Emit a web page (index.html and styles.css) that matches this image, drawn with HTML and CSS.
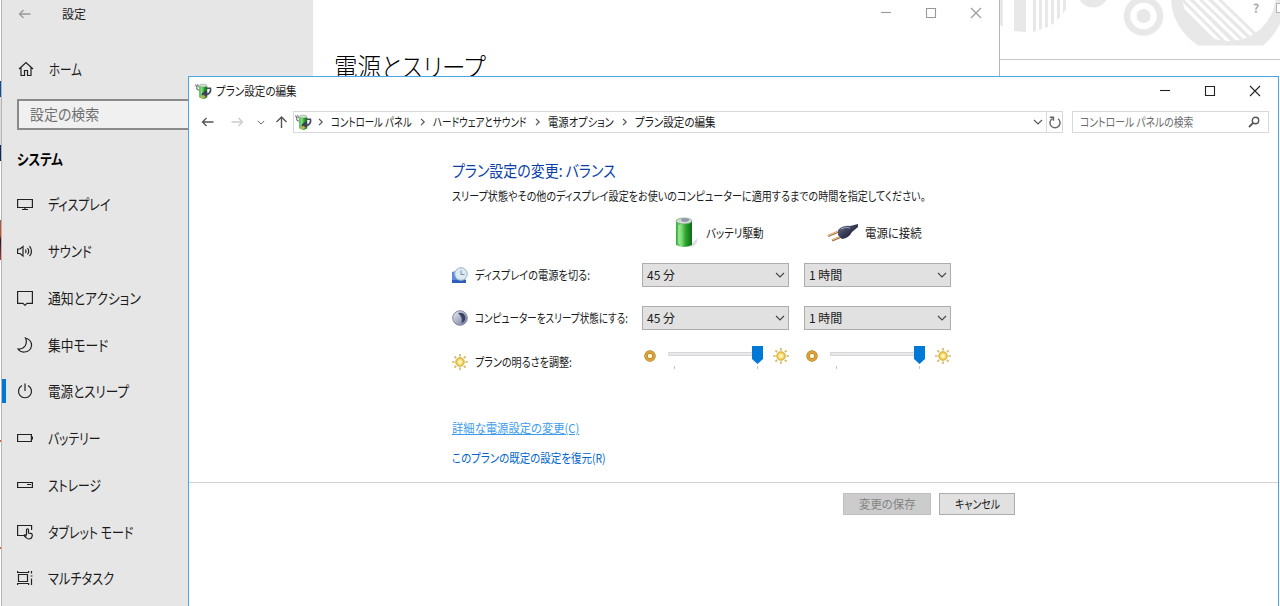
FILE: index.html
```html
<!DOCTYPE html>
<html lang="ja">
<head>
    <meta charset="UTF-8">
    <meta name="viewport" content="width=device-width, initial-scale=1.0">
    <title>プラン設定の編集</title>
    <link rel="stylesheet" href="styles.css">
</head>
<body>
    <!-- shared icons -->
    <svg width="0" height="0" class="defs">
        <defs>
            <clipPath id="ring"><circle cx="1229" cy="-6" r="47"/></clipPath>
            <linearGradient id="green" x1="0" x2="1" y1="0" y2="0">
                <stop offset="0" stop-color="#2fae35"/><stop offset=".3" stop-color="#8be383"/><stop offset=".6" stop-color="#2fa52f"/><stop offset="1" stop-color="#0c6b17"/>
            </linearGradient>
            <radialGradient id="gold">
                <stop offset="0" stop-color="#fffce0"/><stop offset=".5" stop-color="#fae684"/><stop offset="1" stop-color="#d9a91f"/>
            </radialGradient>
            <linearGradient id="moon" x1="0" x2="1" y1="0" y2="1">
                <stop offset="0" stop-color="#eef0f8"/><stop offset="1" stop-color="#6b7594"/>
            </linearGradient>
            <linearGradient id="plug" x1="0" x2="1" y1="0" y2="1">
                <stop offset="0" stop-color="#707894"/><stop offset=".5" stop-color="#353a55"/><stop offset="1" stop-color="#14172b"/>
            </linearGradient>
            <symbol id="power-app" viewBox="0 0 16 16">
                <path d="M4 3v10.500q3.500 3 7.500 0V3z" fill="url(#green)"/>
                <path d="M4 3q0-2 3.700-2t3.800 2q-3.700 1.500-7.500 0z" fill="#d2e3d0" stroke="#869b86" stroke-width=".5"/>
                <path d="M.5 1.500l1.500 3M2.500 1l.7 3M1.500 4.500q.5 2.500 2.500 2" fill="none" stroke="#59616b"/>
                <path d="M11 5h3.500q1 4-3 6" fill="none" stroke="#454c60" stroke-width="1.500"/>
                <path d="M6 11q1-3 5-4.500l1 4.500-4 2z" fill="#3e4357"/>
                <path d="M5 13l3-2 2 2-3 1.500z" fill="#d0a65a"/>
            </symbol>
            <symbol id="sun" viewBox="0 0 16 16">
                <path d="M8 0v16M0 8h16M2.400 2.400l11.200 11.200M13.600 2.400L2.400 13.600" stroke="#d9b962" stroke-width="1.700"/>
                <circle cx="8" cy="8" r="5.500" fill="#fff"/>
                <circle cx="8" cy="8" r="4.400" fill="url(#gold)" stroke="#d8b95a" stroke-width=".8"/>
            </symbol>
            <symbol id="dim" viewBox="0 0 12 12">
                <circle cx="6" cy="6" r="4" fill="#fff6dc" stroke="#a87522" stroke-width="3.400"/>
                <circle cx="6" cy="6" r="4" fill="none" stroke="#dca438" stroke-width="2.400"/>
            </symbol>
            <symbol id="chev" viewBox="0 0 10 6">
                <path d="M1 1l4 4 4-4" fill="none" stroke="currentColor" stroke-width="1.100"/>
            </symbol>
            <symbol id="next" viewBox="0 0 6 8">
                <path d="M1 .8l3.200 3.200L1 7.200" fill="none" stroke="currentColor" stroke-width="1.200"/>
            </symbol>
            <symbol id="arrow" viewBox="0 0 12 10">
                <path d="M12 5H1M5 1L1 5l4 4" fill="none" stroke="currentColor" stroke-width="1.300"/>
            </symbol>
        </defs>
    </svg>

    <div class="edge"></div>

    <div class="backdrop">
        <svg width="280" height="59" viewBox="1000 0 280 59">
            <g fill="#e8e8e8">
                <path d="M1000 0h3v27l-3-2zM1014 0h12v32l-12-1zM1033 0h3v31l-3 1zM1039 0h3v29l-3 1zM1045 0h3v27l-3 1zM1051 0h3v23l-3 2zM1057 0h3v17l-3 3zM1063 0h3v9l-3 5z"/>
                <circle cx="1093" cy="-8" r="15.500"/>
                <path d="M1171 0H1286q-2 28-23 45.500h-65q-25-17-27-45.500z"/>
            </g>
            <circle cx="1143.500" cy="16" r="16.500" fill="none" stroke="#e8e8e8" stroke-width="6.500"/>
            <circle cx="1143.500" cy="16" r="7" fill="#e8e8e8"/>
            <g clip-path="url(#ring)">
                <path d="M1218-4h60v58z" fill="#fff"/>
                <path d="M1166-12l60 60M1177-10l58 58M1186-10l60 58M1196-9l58 56M1207-8l56 54" fill="none" stroke="#fff" stroke-width="3.400"/>
            </g>
            <rect x="1276.500" y="3.500" width="8" height="9" fill="#fff" stroke="#b5b5b5"/>
        </svg>
        <span class="help">?</span>
    </div>

    <div class="settings">
        <div class="sidebar">
            <div class="caption">
                <svg class="back" width="13" height="10"><use href="#arrow"/></svg>
                <span>設定</span>
            </div>
            <div class="home">
                <svg width="16" height="16" viewBox="0 0 16 16"><path d="M1 8l7-6.500L15 8M3 6.500v8h3.500v-5h3v5H13v-8"/></svg>
                <span class="fit f77">ホーム</span>
            </div>
            <div class="search"><span class="fit f93">設定の検索</span></div>
            <h3><span class="fit f83">システム</span></h3>
            <ul>
                <li>
                    <svg width="16" height="16" viewBox="0 0 16 16"><path d="M.6 3.500h14.800v8H.6zM8 11.500V14M5 13.500h6"/></svg>
                    <span class="fit f80">ディスプレイ</span>
                </li>
                <li>
                    <svg width="16" height="16" viewBox="0 0 16 16"><path d="M.6 6v4.500H3L6 13V3.500L3 6zM8.500 6.500q1 1.700 0 3.500M10.500 5q2.500 3.200 0 6.500M12.500 3.200q4 5 0 10"/></svg>
                    <span class="fit f83">サウンド</span>
                </li>
                <li>
                    <svg width="16" height="16" viewBox="0 0 16 16"><path d="M.6 1.500h14.800v11.800H10L8 15.300l-2-2H.6z"/></svg>
                    <span class="fit f86">通知とアクション</span>
                </li>
                <li>
                    <svg width="16" height="16" viewBox="0 0 16 16"><path d="M8.500 1q2 4-.5 8-2.500 3.500-7 3 2.500 3.500 6.500 3 6-.5 7-6Q15 3 8.500 1z"/></svg>
                    <span class="fit f85">集中モード</span>
                </li>
                <li class="current">
                    <svg width="16" height="16" viewBox="0 0 16 16"><path d="M8 .5V8M5 2.500a6.500 6.500 0 1 0 6 0"/></svg>
                    <span class="fit f84">電源とスリープ</span>
                </li>
                <li>
                    <svg width="16" height="16" viewBox="0 0 16 16"><path d="M.6 4.500h13.800v7H.6zM15.400 6.500v3"/></svg>
                    <span class="fit f79">バッテリー</span>
                </li>
                <li>
                    <svg width="16" height="16" viewBox="0 0 16 16"><path d="M.6 5.500h14.800v5H.6zM10 7.500h4"/></svg>
                    <span class="fit f79">ストレージ</span>
                </li>
                <li>
                    <svg width="16" height="16" viewBox="0 0 16 16"><path d="M6.500 11.500H.6v-10h14V6M9.500 11V5.500q1-1.500 2 0v3.500l3 .6q1 .5.700 2.400-.5 3-3.200 3-2 0-3-1.500L7 11.500q.7-1.500 2.500.5"/></svg>
                    <span class="fit f80">タブレット モード</span>
                </li>
                <li>
                    <svg width="16" height="16" viewBox="0 0 16 16"><path d="M1.500 4.500h9v7h-9zM.6 1v1.500h11V1M.6 15v-1.500h11V15M14.500 1v2.500M14.500 8.500V15M13.500 6h2"/></svg>
                    <span class="fit f81">マルチタスク</span>
                </li>
            </ul>
        </div>
        <div class="page">
            <div class="controls">
                <svg width="12" height="12" viewBox="0 0 12 12"><path d="M1 5.500h10"/></svg>
                <svg width="12" height="12" viewBox="0 0 12 12"><path d="M1.500 1.500h9v9h-9z"/></svg>
                <svg width="12" height="12" viewBox="0 0 12 12"><path d="M1 1l10 10M11 1L1 11"/></svg>
            </div>
            <h1><span class="fit f91">電源とスリープ</span></h1>
        </div>
    </div>

    <div class="window">
        <div class="titlebar">
            <svg width="17" height="17"><use href="#power-app"/></svg>
            <span class="title fit f88">プラン設定の編集</span>
            <div class="controls">
                <svg width="12" height="12" viewBox="0 0 12 12"><path d="M1 5.500h10"/></svg>
                <svg width="12" height="12" viewBox="0 0 12 12"><path d="M1.500 1.500h9v9h-9z"/></svg>
                <svg width="12" height="12" viewBox="0 0 12 12"><path d="M1 1l10 10M11 1L1 11"/></svg>
            </div>
        </div>

        <div class="navbar">
            <div class="nav-buttons">
                <svg width="13" height="10"><use href="#arrow"/></svg>
                <svg class="forward" width="13" height="10"><use href="#arrow"/></svg>
                <svg class="recent" width="8" height="5"><use href="#chev"/></svg>
                <svg class="up" width="13" height="12" viewBox="0 0 13 12"><path d="M6.500 12V1M1.500 6l5-5 5 5" fill="none" stroke="currentColor" stroke-width="1.400"/></svg>
            </div>
            <div class="address">
                <svg class="app" width="17" height="17"><use href="#power-app"/></svg>
                <svg class="sep" width="6" height="8"><use href="#next"/></svg>
                <span class="crumb c1"><span class="fit f79">コントロール パネル</span></span>
                <svg class="sep" width="6" height="8"><use href="#next"/></svg>
                <span class="crumb c2"><span class="fit f80">ハードウェアとサウンド</span></span>
                <svg class="sep" width="6" height="8"><use href="#next"/></svg>
                <span class="crumb c3"><span class="fit f86">電源オプション</span></span>
                <svg class="sep" width="6" height="8"><use href="#next"/></svg>
                <span class="crumb"><span class="fit f88">プラン設定の編集</span></span>
                <svg class="drop" width="10" height="6"><use href="#chev"/></svg>
                <div class="refresh">
                    <svg width="12" height="13" viewBox="0 0 12 13"><path d="M3.500 2.500A5 5 0 1 0 9 2.800M.8 1.200h3.700v3.600" fill="none" stroke="#666" stroke-width="1.400"/></svg>
                </div>
            </div>
            <div class="find">
                <span class="fit f82">コントロール パネルの検索</span>
                <svg width="12" height="12" viewBox="0 0 12 12"><circle cx="7.500" cy="4.500" r="3.200" fill="none" stroke="#555" stroke-width="1.400"/><path d="M5.200 6.800L1 11" stroke="#555" stroke-width="1.800"/></svg>
            </div>
        </div>

        <div class="content">
            <h2><span class="fit f87">プラン設定の変更: バランス</span></h2>
            <p class="lead"><span class="fit">スリープ状態やその他のディスプレイ設定をお使いのコンピューターに適用するまでの時間を指定してください。</span></p>

            <div class="plan">
                <div></div>
                <div class="source battery">
                    <svg width="24" height="32" viewBox="0 0 24 32">
                        <path d="M15 30l8-9v4q-2 5-8 5z" fill="#c9c9c9" opacity=".6"/>
                        <path d="M2 4v24q8 4 16 0V4z" fill="url(#green)"/>
                        <ellipse cx="10" cy="4" rx="8" ry="3" fill="#cfdcd0" stroke="#6f9d72" stroke-width=".7"/>
                        <ellipse cx="11" cy="3" rx="4" ry="1.800" fill="#9293ad"/>
                        <path d="M5 8v19" stroke="#b8f0ae" stroke-width="1.500" opacity=".7"/>
                    </svg>
                    <span class="fit f88">バッテリ駆動</span>
                </div>
                <div class="source plugged">
                    <svg width="32" height="18" viewBox="0 0 32 18">
                        <path d="M1 12l12-5M5 16.500l12-5" stroke="#a56c3c" stroke-width="2.200"/>
                        <path d="M1 11.600l12-5M5 16l12-5" stroke="#f1cc9b"/>
                        <path d="M11 6q5-5 12-4l8-2v3l-6 5q-3 6-10 7l-4-4z" fill="url(#plug)"/>
                        <path d="M14 5q5-3 9-1" fill="none" stroke="#a5abc0"/>
                    </svg>
                    <span class="fit f95">電源に接続</span>
                </div>

                <div class="label">
                    <svg width="16" height="16" viewBox="0 0 16 16">
                        <path d="M0 5l11-3 3 13H0z" fill="#5c8ae0"/>
                        <path d="M0 13h14v3H0z" fill="#2f5cc0"/>
                        <circle cx="9" cy="7" r="6.300" fill="#dbe9f3" stroke="#9fb0c3"/>
                        <path d="M9 3.500v4h3.500" fill="none" stroke="#7d90a3"/>
                    </svg>
                    <span class="fit f85">ディスプレイの電源を切る:</span>
                </div>
                <div class="select"><span>45 分</span><svg width="10" height="6"><use href="#chev"/></svg></div>
                <div class="select"><span>1 時間</span><svg width="10" height="6"><use href="#chev"/></svg></div>

                <div class="label">
                    <svg width="16" height="16" viewBox="0 0 16 16">
                        <circle cx="8" cy="8" r="7.300" fill="url(#moon)" stroke="#7d86a0"/>
                        <path d="M6 3q7-1 7.500 5-.5 4-4 5Q11 7 6 3z" fill="#3a4264"/>
                    </svg>
                    <span class="fit f80">コンピューターをスリープ状態にする:</span>
                </div>
                <div class="select"><span>45 分</span><svg width="10" height="6"><use href="#chev"/></svg></div>
                <div class="select"><span>1 時間</span><svg width="10" height="6"><use href="#chev"/></svg></div>

                <div class="label bright">
                    <svg width="16" height="16"><use href="#sun"/></svg>
                    <span class="fit f84">プランの明るさを調整:</span>
                </div>
                <div class="slider">
                    <svg width="12" height="12"><use href="#dim"/></svg>
                    <svg class="track" width="96" height="24" viewBox="0 0 96 24">
                        <path d="M.5 6.500h94v3H.5z" fill="#e7eaea" stroke="#d6d6d6"/>
                        <path d="M6.500 20v3M89.500 20v3" stroke="#c4c4c4"/>
                        <path d="M84 0h11v13l-5.500 5L84 13z" fill="#0078d7"/>
                    </svg>
                    <svg width="16" height="16"><use href="#sun"/></svg>
                </div>
                <div class="slider">
                    <svg width="12" height="12"><use href="#dim"/></svg>
                    <svg class="track" width="96" height="24" viewBox="0 0 96 24">
                        <path d="M.5 6.500h94v3H.5z" fill="#e7eaea" stroke="#d6d6d6"/>
                        <path d="M6.500 20v3M89.500 20v3" stroke="#c4c4c4"/>
                        <path d="M84 0h11v13l-5.500 5L84 13z" fill="#0078d7"/>
                    </svg>
                    <svg width="16" height="16"><use href="#sun"/></svg>
                </div>
            </div>

            <div class="links">
                <a class="hover fit f94">詳細な電源設定の変更(C)</a>
                <a class="fit f87">このプランの既定の設定を復元(R)</a>
            </div>
        </div>

        <div class="footer">
            <div class="button disabled"><span class="fit f95">変更の保存</span></div>
            <div class="button cancel"><span class="fit f83">キャンセル</span></div>
        </div>
    </div>
</body>
</html>
```
FILE: styles.css
```css
* {
    box-sizing: border-box;
}

body {
    margin: 0;
    width: 1280px;
    height: 606px;
    position: relative;
    overflow: hidden;
    background: #fff;
    color: #1a1a1a;
    font-family: "Noto Sans CJK JP", sans-serif;
    font-size: 12px;
    line-height: 18px;
    font-feature-settings: "palt";
}

svg {
    display: block;
    flex: none;
}

h1, h2, h3, p, ul {
    margin: 0;
    padding: 0;
    font-weight: normal;
}

.defs {
    position: absolute;
}

/* condensed kana, like the system UI font */
.fit {
    display: inline-block;
    white-space: nowrap;
    transform-origin: 0 50%;
}

.f77 { transform: scaleX(.765); }
.f79 { transform: scaleX(.785); }
.f80 { transform: scaleX(.797); }
.f81 { transform: scaleX(.815); }
.f82 { transform: scaleX(.82); }
.f83 { transform: scaleX(.83); }
.f84 { transform: scaleX(.838); }
.f85 { transform: scaleX(.85); }
.f86 { transform: scaleX(.857); }
.f87 { transform: scaleX(.873); }
.f88 { transform: scaleX(.88); }
.f91 { transform: scaleX(.905); }
.f93 { transform: scaleX(.93); }
.f94 { transform: scaleX(.943); }
.f95 { transform: scaleX(.95); }

/* Windows behind */
.edge {
    position: absolute;
    left: 0;
    top: 0;
    width: 2px;
    height: 606px;
    border-right: 1px solid #b4b4b4;
    background: linear-gradient(#fff 81px, #0a4ea0 81px, #0a4ea0 97px, #ddd 97px, #ddd 145px, #06285f 145px, #06285f 161px, #fff 161px, #fff 220px, #a05a4a 220px, #e04a20 235px, #30101a 240px, #b03a35 260px, #fff 260px, #fff 440px, #e85a30 440px, #e85a30 442px, #fff 442px, #fff 547px, #e85a30 547px, #e85a30 549px, #fff 549px);
}

.backdrop {
    position: absolute;
    left: 1000px;
    top: 0;
    width: 280px;
    height: 60px;
    border-bottom: 1px solid #c6c6c6;
}

.help {
    position: absolute;
    left: 253px;
    top: -1px;
    color: #aaa;
    font-weight: bold;
}

.settings {
    position: absolute;
    left: 2px;
    top: 0;
    width: 998px;
    height: 606px;
    display: flex;
    border-right: 1px solid #b4b4b4;
    background: #fff;
}

.sidebar {
    width: 311px;
    background: #e6e6e6;
    font-size: 15px;
}

.sidebar svg {
    fill: none;
    stroke: #222;
    stroke-width: 1.2;
}

.caption {
    display: flex;
    align-items: center;
    height: 27px;
    padding-left: 16px;
    font-size: 12px;
}

.caption span {
    margin-left: 31px;
}

.caption .back {
    color: #999;
    stroke: none;
}

.home {
    display: flex;
    align-items: center;
    gap: 15px;
    height: 32px;
    margin-top: 26px;
    padding-left: 16px;
}

.search {
    width: 280px;
    height: 31px;
    margin: 14px 0 0 15px;
    padding: 4px 11px;
    border: 2px solid #8a8a8a;
    background: #f0f0f0;
    color: #707070;
}

h3 {
    margin: 20px 0 0 15px;
    font-size: 15px;
    font-weight: bold;
    color: #000;
}

ul {
    margin-top: 13px;
    list-style: none;
}

li {
    display: flex;
    align-items: center;
    gap: 15px;
    height: 46.75px;
    padding-left: 15px;
}

.current {
    background: linear-gradient(#0078d7, #0078d7) 0 50% / 4px 24px no-repeat;
}

.page {
    flex: 1;
}

.controls {
    display: flex;
    gap: 33px;
}

.controls svg {
    fill: none;
    stroke: #222;
    stroke-width: 1.1;
}

.page .controls {
    justify-content: flex-end;
    margin-top: 7px;
    margin-right: 17px;
}

.page .controls svg {
    stroke: #999;
}

h1 {
    margin: 28px 0 0 21px;
    font-size: 26px;
    font-weight: 300;
    line-height: 38px;
    color: #000;
}

/* Control panel window */
.window {
    position: absolute;
    left: 188px;
    top: 76px;
    width: 1091px;
    height: 540px;
    border: 1px solid #4aa5e8;
    background: #fff;
}

.titlebar {
    display: flex;
    align-items: center;
    height: 28px;
    padding-left: 6px;
}

.title {
    margin-left: 4px;
}

.titlebar .controls {
    margin-left: auto;
    margin-right: 17px;
}

.navbar {
    display: flex;
    align-items: center;
    height: 22px;
    margin-top: 6px;
    color: #555;
}

.nav-buttons {
    display: flex;
    align-items: center;
    width: 104px;
    padding-left: 12px;
}

.forward {
    margin-left: 17px;
    color: #ccc;
    transform: scaleX(-1);
}

.recent {
    margin-left: 13px;
}

.up {
    margin-left: 10px;
}

.address {
    display: flex;
    align-items: center;
    width: 770px;
    height: 22px;
    padding-left: 1px;
    border: 1px solid #d9d9d9;
    color: #555;
}

.sep {
    margin-left: 6px;
}

.crumb {
    margin-left: 7px;
    color: #1a1a1a;
}

.c1 { width: 83px; }
.c2 { width: 96px; }
.c3 { width: 68px; }

.drop {
    margin-left: auto;
    margin-right: 3px;
}

.refresh {
    display: flex;
    align-items: center;
    justify-content: center;
    width: 16px;
    height: 20px;
    border-left: 1px solid #d9d9d9;
}

.find {
    display: flex;
    align-items: center;
    justify-content: space-between;
    width: 197px;
    height: 22px;
    margin-left: 9px;
    padding: 0 8px 0 7px;
    border: 1px solid #d9d9d9;
    color: #6d6d6d;
}

.content {
    height: 349px;
    padding: 25px 0 0 263px;
}

h2 {
    height: 24px;
    font-size: 16px;
    line-height: 24px;
    color: #0b3fa8;
}

.lead {
    height: 18px;
    margin-top: 5px;
}

.lead .fit {
    transform: scaleX(.839);
}

.plan {
    display: grid;
    grid-template-columns: 175px 147px 147px;
    grid-template-rows: 48px 43px 43px 43px;
    column-gap: 15px;
    align-items: center;
}

.source {
    display: flex;
    align-items: center;
    padding-top: 8px;
}

.battery {
    padding-left: 32px;
}

.battery .fit {
    margin-left: 8px;
}

.plugged {
    padding-left: 23px;
}

.plugged .fit {
    margin-left: 6px;
}

.label {
    display: flex;
    align-items: center;
    gap: 7px;
    height: 24px;
}

.bright {
    padding-top: 3px;
}

.select {
    display: flex;
    align-items: center;
    justify-content: space-between;
    height: 24px;
    padding: 0 3px 0 4px;
    border: 1px solid #adadad;
    background: #e1e1e1;
}

.select svg {
    color: #444;
}

.slider {
    display: flex;
    align-items: center;
    height: 24px;
    margin-top: -10px;
    padding-left: 2px;
}

.track {
    margin: 4px 9px 0 12px;
}

.links {
    display: flex;
    flex-direction: column;
    align-items: flex-start;
    gap: 12px;
    margin-top: 37px;
    color: #0066cc;
}

.hover {
    color: #3d9bee;
    text-decoration: underline;
}

.footer {
    display: flex;
    gap: 8px;
    padding: 10px 0 0 654px;
    border-top: 1px solid #d4d4d4;
}

.button {
    display: flex;
    align-items: center;
    width: 88px;
    height: 22px;
    padding-left: 15px;
    border: 1px solid #adadad;
    background: #e1e1e1;
}

.cancel {
    width: 76px;
}

.disabled {
    border-color: #bfbfbf;
    background: #ccc;
    color: #838383;
}
```
